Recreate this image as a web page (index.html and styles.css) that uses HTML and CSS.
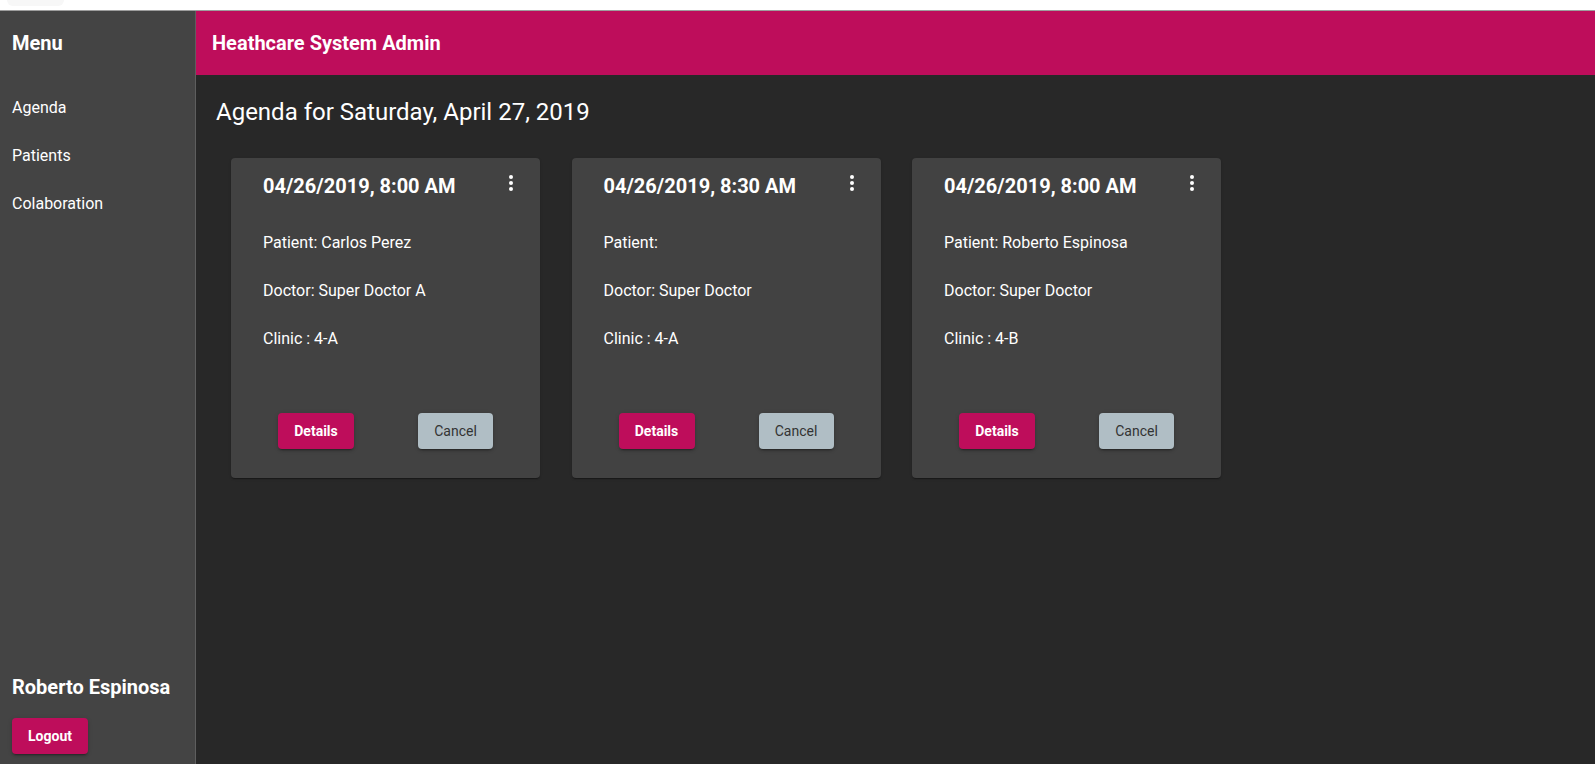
FILE: index.html
```html
<!DOCTYPE html>
<html>
<head>
<meta charset="utf-8">
<link rel="stylesheet" href="styles.css">
</head>
<body>
<div class="topstrip"><div class="tab"></div></div>
<div class="app">
  <aside class="sidebar">
    <div class="side-title">Menu</div>
    <nav class="nav">
      <a class="nav-item">Agenda</a>
      <a class="nav-item">Patients</a>
      <a class="nav-item">Colaboration</a>
    </nav>
    <div class="side-bottom">
      <div class="user">Roberto Espinosa</div>
      <button class="btn btn-primary">Logout</button>
    </div>
  </aside>
  <main class="main">
    <header class="toolbar">Heathcare System Admin</header>
    <section class="content">
      <h2 class="heading">Agenda for Saturday, April 27, 2019</h2>
      <div class="cards">
        <div class="card">
          <div class="card-head">
            <div class="card-title">04/26/2019, 8:00 AM</div>
            <svg class="more" viewBox="0 0 24 24"><circle cx="12" cy="6" r="2"/><circle cx="12" cy="12" r="2"/><circle cx="12" cy="18" r="2"/></svg>
          </div>
          <p class="line">Patient: Carlos Perez</p>
          <p class="line">Doctor: Super Doctor A</p>
          <p class="line">Clinic : 4-A</p>
          <div class="actions">
            <button class="btn btn-primary">Details</button>
            <button class="btn btn-grey">Cancel</button>
          </div>
        </div>
        <div class="card">
          <div class="card-head">
            <div class="card-title">04/26/2019, 8:30 AM</div>
            <svg class="more" viewBox="0 0 24 24"><circle cx="12" cy="6" r="2"/><circle cx="12" cy="12" r="2"/><circle cx="12" cy="18" r="2"/></svg>
          </div>
          <p class="line">Patient:</p>
          <p class="line">Doctor: Super Doctor</p>
          <p class="line">Clinic : 4-A</p>
          <div class="actions">
            <button class="btn btn-primary">Details</button>
            <button class="btn btn-grey">Cancel</button>
          </div>
        </div>
        <div class="card">
          <div class="card-head">
            <div class="card-title">04/26/2019, 8:00 AM</div>
            <svg class="more" viewBox="0 0 24 24"><circle cx="12" cy="6" r="2"/><circle cx="12" cy="12" r="2"/><circle cx="12" cy="18" r="2"/></svg>
          </div>
          <p class="line">Patient: Roberto Espinosa</p>
          <p class="line">Doctor: Super Doctor</p>
          <p class="line">Clinic : 4-B</p>
          <div class="actions">
            <button class="btn btn-primary">Details</button>
            <button class="btn btn-grey">Cancel</button>
          </div>
        </div>
      </div>
    </section>
  </main>
</div>
</body>
</html>
```
FILE: styles.css
```css
* { box-sizing: border-box; }
html, body { margin: 0; padding: 0; height: 100%; }
body {
  font-family: Roboto, "Liberation Sans", sans-serif;
  background: #ffffff;
  overflow: hidden;
}
.topstrip {
  height: 11px;
  background: #ffffff;
  border-bottom: 1px solid #9e9e9e;
  padding-left: 7px;
}
.tab {
  width: 57px;
  height: 6px;
  background: #f7f7f7;
  border-radius: 0 0 6px 6px;
}
.app {
  display: flex;
  height: 753px;
}
.sidebar {
  width: 196px;
  background: #444444;
  border-right: 1px solid #5e5e5e;
  display: flex;
  flex-direction: column;
  color: #ffffff;
}
.side-title {
  height: 64px;
  display: flex;
  align-items: center;
  padding-left: 12px;
  font-size: 20px;
  font-weight: 700;
}
.nav {
  padding-top: 8px;
  display: flex;
  flex-direction: column;
}
.nav-item {
  height: 48px;
  display: flex;
  align-items: center;
  padding-left: 12px;
  font-size: 16px;
  color: #ffffff;
}
.side-bottom {
  margin-top: auto;
  padding: 0 12px 10px;
}
.user {
  font-size: 20px;
  font-weight: 700;
  line-height: 24px;
  margin-bottom: 19px;
}
.main {
  flex: 1;
  background: #282828;
  display: flex;
  flex-direction: column;
}
.toolbar {
  height: 64px;
  background: #be0d5b;
  color: #ffffff;
  font-size: 20px;
  font-weight: 700;
  display: flex;
  align-items: center;
  padding-left: 16px;
}
.content {
  padding: 21px 20px;
}
.heading {
  margin: 0;
  font-size: 24px;
  font-weight: 400;
  line-height: 32px;
  color: #ffffff;
}
.cards {
  display: flex;
  gap: 31.5px;
  margin-top: 30px;
  padding-left: 15px;
}
.card {
  width: 309px;
  height: 320px;
  background: #424242;
  border-radius: 4px;
  box-shadow: 0 2px 1px -1px rgba(0,0,0,.2), 0 1px 1px 0 rgba(0,0,0,.14), 0 1px 3px 0 rgba(0,0,0,.12);
  padding: 16px 17px 0 32px;
  color: #ffffff;
  display: flex;
  flex-direction: column;
}
.card-head {
  display: flex;
  justify-content: space-between;
  align-items: flex-start;
  height: 24px;
}
.card-title {
  font-size: 20px;
  font-weight: 700;
  line-height: 24px;
}
.more {
  width: 24px;
  height: 24px;
  fill: #ffffff;
  margin-top: -3px;
}
.line {
  margin: 0;
  font-size: 16px;
  line-height: 24px;
}
.card-head + .line { margin-top: 33px; }
.line + .line { margin-top: 24px; }
.actions {
  display: flex;
  justify-content: space-between;
  margin-top: 62px;
  padding: 0 30px 0 15px;
}
.btn {
  height: 36px;
  min-width: 75px;
  padding: 0 16px;
  border: none;
  border-radius: 4px;
  font-family: Roboto, "Liberation Sans", sans-serif;
  font-size: 14px;
  box-shadow: 0 3px 1px -2px rgba(0,0,0,.2), 0 2px 2px 0 rgba(0,0,0,.14), 0 1px 5px 0 rgba(0,0,0,.12);
}
.btn-primary {
  background: #be0d5b;
  color: #ffffff;
  font-weight: 700;
  min-width: 76px;
}
.btn-grey {
  background: #b0bec5;
  color: #333333;
  font-weight: 400;
}
```
